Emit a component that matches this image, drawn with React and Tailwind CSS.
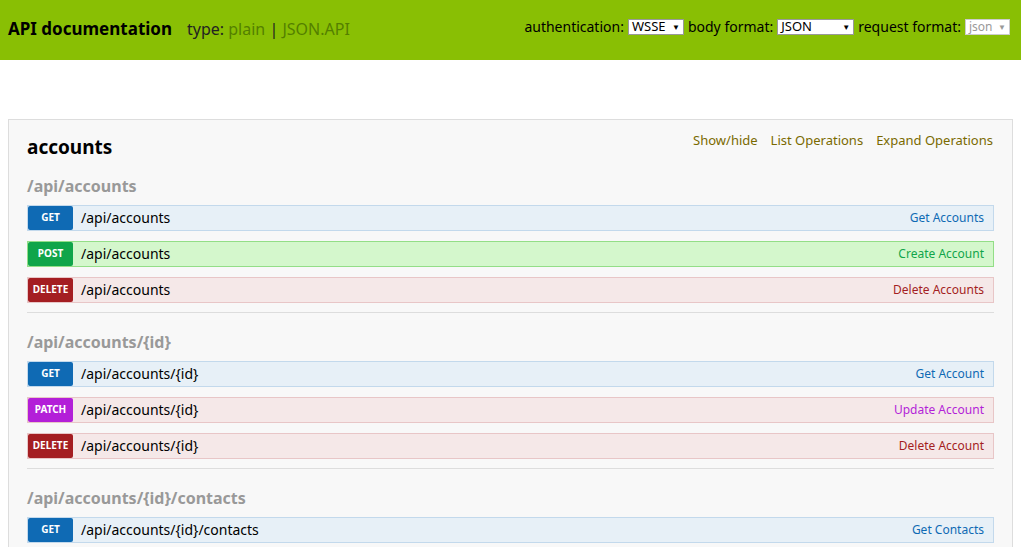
const M = {
  GET: { badge: "bg-[#0f6ab4]", row: "bg-[#e7f0f7] border-[#c3d9ec]", text: "text-[#0f6ab4]" },
  POST: { badge: "bg-[#10a54a]", row: "bg-[#d4f7cc] border-[#93de87]", text: "text-[#10a54a]" },
  DELETE: { badge: "bg-[#a41e22]", row: "bg-[#f5e8e8] border-[#e8c6c7]", text: "text-[#a41e22]" },
  PATCH: { badge: "bg-[#b31fd8]", row: "bg-[#f5e8e8] border-[#e8c6c7]", text: "text-[#b31fd8]" },
};

const groups = [
  {
    path: "/api/accounts",
    ops: [
      ["GET", "/api/accounts", "Get Accounts"],
      ["POST", "/api/accounts", "Create Account"],
      ["DELETE", "/api/accounts", "Delete Accounts"],
    ],
  },
  {
    path: "/api/accounts/{id}",
    ops: [
      ["GET", "/api/accounts/{id}", "Get Account"],
      ["PATCH", "/api/accounts/{id}", "Update Account"],
      ["DELETE", "/api/accounts/{id}", "Delete Account"],
    ],
  },
  {
    path: "/api/accounts/{id}/contacts",
    ops: [["GET", "/api/accounts/{id}/contacts", "Get Contacts"]],
  },
];

function Select({ value, w }) {
  return (
    <span className={`inline-flex items-center justify-between bg-white border border-[#999] h-[16px] px-[3px] text-[13px] leading-none text-black ${w}`}>
      {value}
      <span className="text-[8px]">▼</span>
    </span>
  );
}

export default function App() {
  return (
    <div className="h-[547px] overflow-y-scroll font-['Open_Sans',sans-serif] text-[#222]">
      <div className="h-[60px] bg-[#89bf04] flex items-center justify-between pl-[8px] pr-[11px]">
        <div className="flex items-center gap-[15px] -mt-[2px]">
          <span className="font-bold text-[17px] text-black">API documentation</span>
          <span className="text-[16px] text-[#222]">
            type: <span className="text-[#547f00]">plain</span> | <span className="text-[#547f00]">JSON.API</span>
          </span>
        </div>
        <div className="flex items-center gap-[4px] text-[14px] text-black self-start mt-[16px]">
          authentication: <Select value="WSSE" w="w-[56px]" />
          body format: <Select value="JSON" w="w-[77px]" />
          request format: <span className="inline-flex items-center justify-between bg-white border border-[#ccc] h-[16px] px-[3px] text-[12px] leading-none text-[#999] w-[45px]">json<span className="text-[8px]">▼</span></span>
        </div>
      </div>
      <div className="pt-[59px] px-[8px] pb-[40px]">
        <div className="border border-[#ddd] bg-[#f8f8f8] px-[18px] pt-[12px] pb-[20px]">
          <div className="flex items-start justify-between">
            <h2 className="font-bold text-[19px] text-black mt-[1px]">accounts</h2>
            <div className="flex gap-[13px] text-[13px] text-[#7a6a00] mr-[1px] mt-[-1px]">
              <span>Show/hide</span>
              <span>List Operations</span>
              <span>Expand Operations</span>
            </div>
          </div>
          {groups.map((g, gi) => (
            <div key={g.path} className={gi ? "border-t border-[#ddd] mt-[9px] pt-[17px]" : "mt-[12px]"}>
              <h3 className="font-bold text-[16px] text-[#999] mb-[7px]">{g.path}</h3>
              <div className="flex flex-col gap-[10px]">
                {g.ops.map(([m, p, d]) => (
                  <div key={m + p} className={`flex items-center h-[26px] border ${M[m].row}`}>
                    <span className={`${M[m].badge} text-white text-[10px] font-bold w-[45px] h-[24px] flex items-center justify-center rounded-[2px]`}>{m}</span>
                    <span className="ml-[8px] text-[14px] text-black flex-1">{p}</span>
                    <span className={`text-[12px] mr-[9px] ${M[m].text}`}>{d}</span>
                  </div>
                ))}
              </div>
            </div>
          ))}
        </div>
      </div>
    </div>
  );
}
